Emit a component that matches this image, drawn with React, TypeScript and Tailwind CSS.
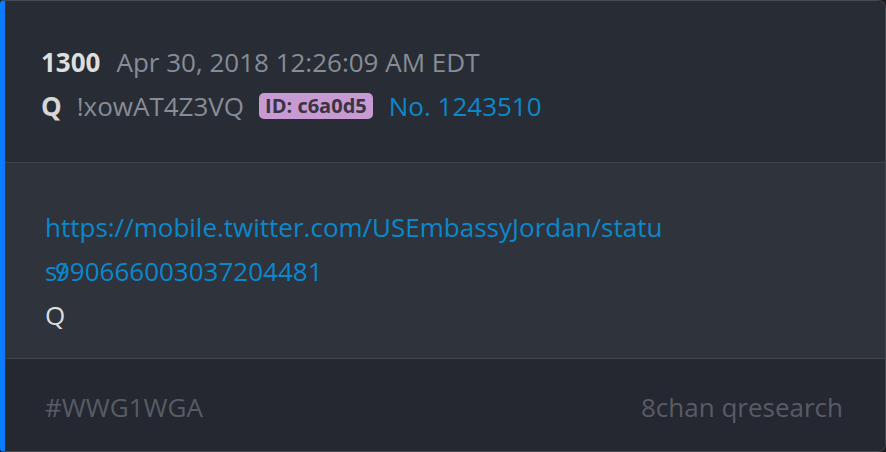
import React from 'react';

export default function App() {
  return (
    <div className="h-[452px] w-[886px] bg-[#1b1d22] font-['Open_Sans',sans-serif] text-[26px] leading-[44px]">
      <div className="flex h-full flex-col overflow-hidden rounded-r-[8px] rounded-l-[4px] border border-l-[5px] border-[#454a53] border-l-[#0a7cff]">
        {/* header */}
        <div className="h-[161px] bg-[#282c34] px-[36px] pt-[39px]">
          <div className="flex items-center">
            <span className="font-bold text-[#dedede]">1300</span>
            <span className="ml-[16px] text-[#878c96]">Apr 30, 2018 12:26:09 AM EDT</span>
          </div>
          <div className="flex items-center">
            <span className="font-bold text-[#d6d6d6]">Q</span>
            <span className="ml-[15px] text-[#878c96]">!xowAT4Z3VQ</span>
            <span className="ml-[15px] rounded-[5px] bg-[#c79ad4] px-[6px] text-[20px] leading-[26px] font-bold text-[#3a3340]">
              ID: c6a0d5
            </span>
            <span className="ml-[16px] text-[#0b88cc]">No. 1243510</span>
          </div>
        </div>
        {/* body */}
        <div className="h-[196px] border-t border-[#40454e] bg-[#2e333c] px-[40px] pt-[42px]">
          <div className="w-[630px] break-all text-[#0b88cc]">
            https://mobile.twitter.com/USEmbassyJordan/statu
            <br />
            s<span className="-mr-[12px]">/</span>990666003037204481
          </div>
          <div className="text-[#dcdcdc]">Q</div>
        </div>
        {/* footer */}
        <div className="flex flex-1 items-start justify-between border-t border-[#40454e] bg-[#252830] pl-[40px] pr-[42px] pt-[26px] text-[#575c66]">
          <span>#WWG1WGA</span>
          <span>8chan qresearch</span>
        </div>
      </div>
    </div>
  );
}
